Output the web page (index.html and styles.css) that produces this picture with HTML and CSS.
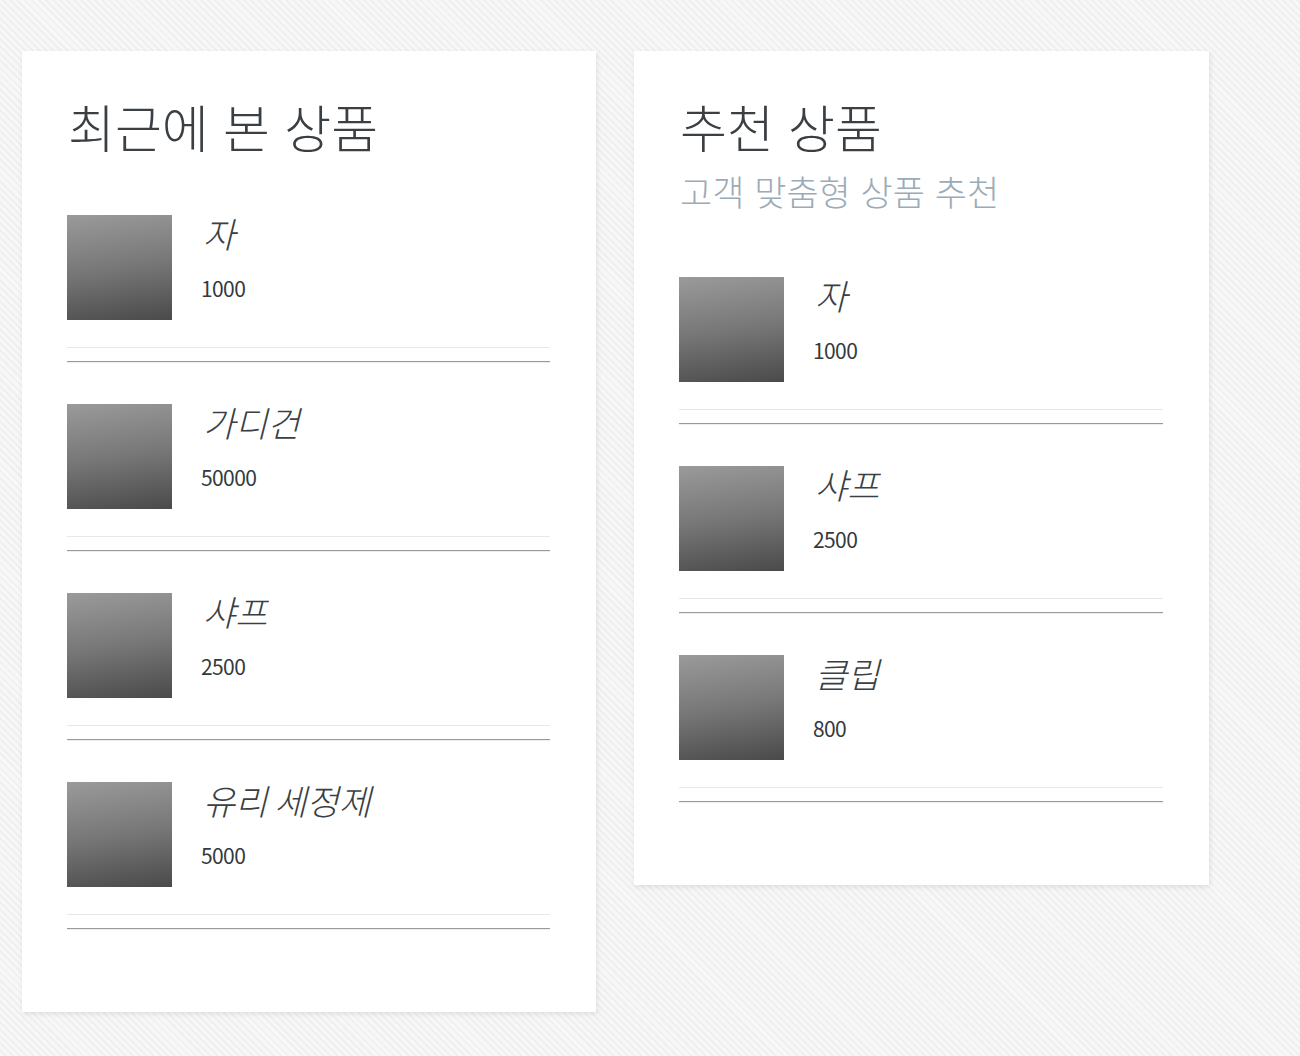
FILE: index.html
```html
<!DOCTYPE html>
<html lang="ko">
<head>
<meta charset="utf-8">
<title>상품</title>
<link rel="stylesheet" href="styles.css">
</head>
<body>
<div class="page">
  <section class="card">
    <h1 class="title">최근에 본 상품</h1>
    <ul class="list">
      <li>
        <div class="item"><div class="thumb"></div><div class="info"><p class="name">자</p><p class="price">1000</p></div></div>
        <hr class="sep">
      </li>
      <li>
        <div class="item"><div class="thumb"></div><div class="info"><p class="name">가디건</p><p class="price">50000</p></div></div>
        <hr class="sep">
      </li>
      <li>
        <div class="item"><div class="thumb"></div><div class="info"><p class="name">샤프</p><p class="price">2500</p></div></div>
        <hr class="sep">
      </li>
      <li>
        <div class="item"><div class="thumb"></div><div class="info"><p class="name">유리 세정제</p><p class="price">5000</p></div></div>
        <hr class="sep">
      </li>
    </ul>
  </section>
  <section class="card card-wide">
    <h1 class="title">추천 상품</h1>
    <p class="subtitle">고객 맞춤형 상품 추천</p>
    <ul class="list">
      <li>
        <div class="item"><div class="thumb"></div><div class="info"><p class="name">자</p><p class="price">1000</p></div></div>
        <hr class="sep">
      </li>
      <li>
        <div class="item"><div class="thumb"></div><div class="info"><p class="name">샤프</p><p class="price">2500</p></div></div>
        <hr class="sep">
      </li>
      <li>
        <div class="item"><div class="thumb"></div><div class="info"><p class="name">클립</p><p class="price">800</p></div></div>
        <hr class="sep">
      </li>
    </ul>
  </section>
</div>
</body>
</html>
```
FILE: styles.css
```css
html, body {
  margin: 0;
  padding: 0;
}
body {
  min-height: 1056px;
  background-color: #f5f5f5;
  background-image: repeating-linear-gradient(45deg, #f7f7f7 0, #f7f7f7 3px, #efefef 3px, #efefef 5px);
  font-family: "Noto Sans CJK KR", "Noto Sans", sans-serif;
  color: #3a3f44;
}
.page {
  display: flex;
  align-items: flex-start;
  gap: 38px;
  padding: 51px 0 0 22px;
}
.card {
  width: 574px;
  box-sizing: border-box;
  background: #fff;
  padding: 40px 46px 41px 45px;
  box-shadow: 1px 2px 5px rgba(0, 0, 0, 0.09);
}
.card-wide {
  width: 575px;
}
.title {
  margin: 0;
  font-size: 51px;
  font-weight: 300;
  line-height: 70px;
  color: #3a3f44;
  padding-left: 1px;
}
.subtitle {
  margin: 9px 0 0;
  font-size: 35px;
  font-weight: 300;
  line-height: 42px;
  color: #9aabb8;
  padding-left: 1px;
}
.card .list {
  list-style: none;
  margin: 54px 0 0;
  padding: 0;
}
.subtitle + .list {
  margin-top: 65px;
}
.item {
  display: flex;
  gap: 29px;
  padding-bottom: 27px;
  border-bottom: 1px solid #e8e8e8;
}
.thumb {
  width: 105px;
  height: 105px;
  flex: none;
  background: linear-gradient(172deg, #9a9a9a 0%, #777 50%, #4a4a4a 100%);
}
.name {
  margin: 0;
  font-size: 35px;
  font-style: italic;
  font-weight: 300;
  line-height: 36px;
  padding-left: 2px;
  color: #3a3f44;
  word-spacing: -3px;
}
.price {
  margin: 25px 0 0;
  font-size: 21px;
  line-height: 24px;
  letter-spacing: -0.6px;
  color: #333a40;
}
.sep {
  margin: 13px 0 41px;
  border: 0;
  border-top: 1px solid #999;
  border-bottom: 1px solid #eee;
  height: 0;
}
```
